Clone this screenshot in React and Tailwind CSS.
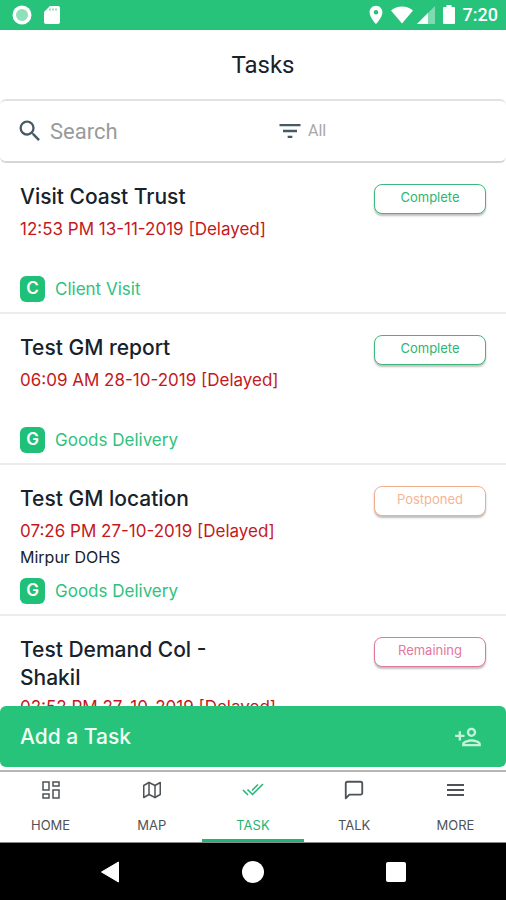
import { FiMap, FiMessageSquare } from 'react-icons/fi'
import { MdFilterList, MdLocationOn, MdOutlinePersonAdd, MdSearch } from 'react-icons/md'

const tasks = [
  { title: 'Visit Coast Trust', due: '12:53 PM 13-11-2019 [Delayed]', type: 'Client Visit', status: 'Complete' },
  { title: 'Test GM report', due: '06:09 AM 28-10-2019 [Delayed]', type: 'Goods Delivery', status: 'Complete' },
  {
    title: 'Test GM location',
    due: '07:26 PM 27-10-2019 [Delayed]',
    address: 'Mirpur DOHS',
    type: 'Goods Delivery',
    status: 'Postponed',
  },
  { title: 'Test Demand Col - Shakil', due: '02:52 PM 27-10-2019 [Delayed]', type: 'Goods Delivery', status: 'Remaining' },
]

const statusStyles = {
  Complete: 'border-[#3fb87c] text-[#2bb673]',
  Postponed: 'border-[#f0b08e] text-[#f5b595]',
  Remaining: 'border-[#e0779d] text-[#e4789f]',
}

function DashboardIcon() {
  return (
    <svg viewBox="0 0 20 20" className="size-5" fill="none" stroke="currentColor" strokeWidth="1.5">
      <rect x="2" y="2" width="6" height="8" />
      <rect x="12" y="2" width="6" height="4" />
      <rect x="2" y="14" width="6" height="4" />
      <rect x="12" y="10" width="6" height="8" />
    </svg>
  )
}

function DoubleCheckIcon() {
  return (
    <svg viewBox="0 0 22 20" className="h-5 w-[22px]" fill="none" stroke="currentColor" strokeWidth="1.5">
      <path d="M1 10l5 5M5.500 9.500l5 5L21 4M10 10.500L16 4.500" />
    </svg>
  )
}

function MenuIcon() {
  return (
    <svg viewBox="0 0 20 20" className="size-5" fill="none" stroke="currentColor" strokeWidth="1.8">
      <path d="M2 5h17M2 10h17M2 15h17" />
    </svg>
  )
}

function StatusBar() {
  return (
    <div className="flex h-[30px] shrink-0 items-center justify-between bg-[#27c37b] pr-2 pl-3 font-[Roboto,sans-serif] text-white">
      <div className="flex items-center gap-3">
        <svg viewBox="0 0 20 20" className="size-5">
          <circle cx="10" cy="10" r="9.500" fill="#fff" />
          <circle cx="10" cy="10" r="6" fill="#8fdfb9" />
        </svg>
        <svg viewBox="0 0 16 20" className="h-5 w-4" fill="currentColor">
          <path d="M6 1h8a2 2 0 0 1 2 2v14a2 2 0 0 1-2 2H2a2 2 0 0 1-2-2V7z" />
          <path d="M6 3.500v2M9 3.500v2M12 3.500v2" stroke="#27c37b" />
        </svg>
      </div>
      <div className="flex items-center">
        <MdLocationOn className="mr-1 size-[22px]" />
        <svg viewBox="0 0 22 18" className="mr-1 h-[18px] w-[22px]" fill="currentColor">
          <path d="M11 17.500L0 4.500C6-1 16-1 22 4.500z" />
        </svg>
        <svg viewBox="0 0 18 18" className="mr-2 size-[18px]" fill="currentColor">
          <path d="M18 0v18H0z" opacity="0.4" />
          <path d="M11 7v11H0z" />
        </svg>
        <svg viewBox="0 0 12 20" className="mr-2 h-5 w-3" fill="currentColor">
          <path d="M3.500 0h5v2H11a1 1 0 0 1 1 1v15a1 1 0 0 1-1 1H1a1 1 0 0 1-1-1V3a1 1 0 0 1 1-1h2.500z" />
        </svg>
        <span className="text-lg font-medium">7:20</span>
      </div>
    </div>
  )
}

function TaskItem({ task }) {
  return (
    <li className="flex min-h-[151px] flex-col border-b-2 border-[#ececec] px-5 pt-5 pb-[10px]">
      <div className="flex items-start justify-between">
        <h2 className="max-w-[220px] text-[21px] leading-7 font-medium text-[#17222b]">{task.title}</h2>
        <button
          className={`mt-px h-[30px] w-28 rounded-lg border-[1.5px] bg-white pb-[3px] text-[13px] shadow-[0_2px_2px_rgba(0,0,0,0.25)] ${statusStyles[task.status]}`}
        >
          {task.status}
        </button>
      </div>
      <p className="mt-0.5 text-[17px] leading-[26px] whitespace-nowrap text-[#c4191c]">{task.due}</p>
      {task.address && <p className="text-base leading-[26px] text-[#17222b]">{task.address}</p>}
      <div className="mt-auto flex items-center gap-[10px]">
        <span className="flex h-[26px] w-[25px] items-center justify-center rounded-md bg-[#1fc077] text-[17px] font-semibold text-white">
          {task.type[0]}
        </span>
        <span className="text-[17px] leading-6 text-[#2fc27d]">{task.type}</span>
      </div>
    </li>
  )
}

const tabs = [
  { label: 'HOME', icon: <DashboardIcon /> },
  { label: 'MAP', icon: <FiMap className="size-[18px]" /> },
  { label: 'TASK', icon: <DoubleCheckIcon />, active: true },
  { label: 'TALK', icon: <FiMessageSquare className="size-[22px]" /> },
  { label: 'MORE', icon: <MenuIcon /> },
]

export default function App() {
  return (
    <div className="flex h-screen flex-col bg-white font-[Inter,sans-serif]">
      <StatusBar />
      <header className="flex h-[69px] shrink-0 items-center justify-center pl-5">
        <h1 className="font-[Roboto,sans-serif] text-2xl text-[#17222b]">Tasks</h1>
      </header>

      <div className="flex h-16 shrink-0 items-center rounded-md border-t-2 border-b-2 border-t-[#e2e2e2] border-b-[#d6d6d6] font-[Roboto,sans-serif]">
        <label className="flex flex-1 items-center gap-1.5 pl-4">
          <MdSearch className="size-7 shrink-0 text-[#455a64]" />
          <input
            type="text"
            aria-label="Search"
            placeholder="Search"
            className="w-full min-w-0 text-[22px] outline-none placeholder:text-[#9a9a9a]"
          />
        </label>
        <div className="flex-1 pl-[30px]">
          <button className="flex items-center gap-1 text-base text-[#a8a8a8]">
            <MdFilterList className="size-7 text-[#455a64]" />
            All
          </button>
        </div>
      </div>

      <ul className="min-h-0 flex-1 overflow-hidden">
        {tasks.map((task) => (
          <TaskItem key={task.title} task={task} />
        ))}
      </ul>

      <button className="flex h-[61px] shrink-0 items-center justify-between rounded-md bg-[#27c37b] pr-6 pl-5 text-[21px] font-medium text-[#effff6]">
        Add a Task
        <MdOutlinePersonAdd className="size-7 text-[#c4f3da]" />
      </button>

      <nav className="mt-[3px] grid h-[73px] shrink-0 grid-cols-5 border-t-2 border-b border-t-[#b5b5b5] border-b-[#8a8a8a]">
        {tabs.map((tab) => (
          <a
            key={tab.label}
            href="#"
            className={`flex flex-col items-center border-b-[3px] pt-[7px] text-[13px] ${
              tab.active ? 'border-[#1fb573] text-[#1fb573]' : 'border-transparent text-[#4d5357]'
            }`}
          >
            <span className="flex h-[22px] items-center">{tab.icon}</span>
            <span className="mt-auto pb-1 leading-5">{tab.label}</span>
          </a>
        ))}
      </nav>

      <div className="flex h-[57px] shrink-0 items-center justify-center gap-[122px] bg-black">
        <button aria-label="Back">
          <svg viewBox="0 0 20 22" className="h-[22px] w-5" fill="#fff">
            <path d="M18.500 1v20L1.500 11z" stroke="#fff" strokeLinejoin="round" />
          </svg>
        </button>
        <button aria-label="Home" className="size-[22px] rounded-full bg-white" />
        <button aria-label="Recent apps" className="size-5 rounded-xs bg-white" />
      </div>
    </div>
  )
}
